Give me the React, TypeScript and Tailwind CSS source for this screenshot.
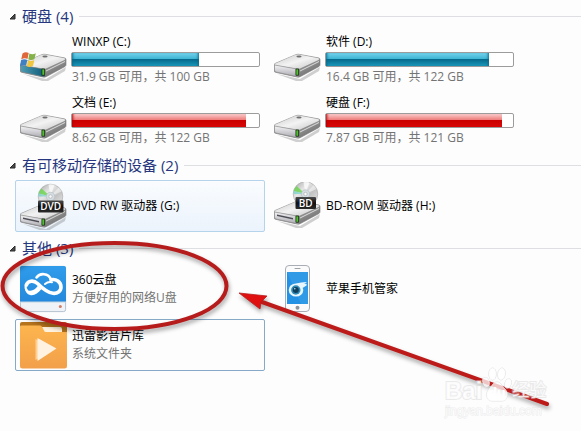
import type { ReactNode } from "react";
import clsx from "clsx";

interface SectionProps {
  title: string;
  count: number;
  children: ReactNode;
}

interface TileProps {
  icon: ReactNode;
  name: string;
  detail?: string;
  className?: string;
}

interface Drive {
  name: string;
  used: number;
  detail: string;
  full?: boolean;
  system?: boolean;
}

const drives: Drive[] = [
  { name: "WINXP (C:)", used: 68, detail: "31.9 GB 可用，共 100 GB", system: true },
  { name: "软件 (D:)", used: 87, detail: "16.4 GB 可用，共 122 GB" },
  { name: "文档 (E:)", used: 93, detail: "8.62 GB 可用，共 122 GB", full: true },
  { name: "硬盘 (F:)", used: 94, detail: "7.87 GB 可用，共 121 GB", full: true },
];

// Shared gradients for all of the icons
function Gradients() {
  return (
    <svg className="absolute size-0" aria-hidden="true">
      <defs>
        <linearGradient id="driveTop" x1="0" y1="0" x2="1" y2="1">
          <stop offset="0" stopColor="#c9c9c9" />
          <stop offset="0.5" stopColor="#f3f3f3" />
          <stop offset="1" stopColor="#c4c4c4" />
        </linearGradient>
        <linearGradient id="driveSide" x1="0" y1="0" x2="1" y2="1">
          <stop offset="0" stopColor="#d8d8d8" />
          <stop offset="0.5" stopColor="#9a9a9a" />
          <stop offset="1" stopColor="#626262" />
        </linearGradient>
        <linearGradient id="driveFront" x1="0" y1="0" x2="0" y2="1">
          <stop offset="0" stopColor="#f4f4f6" />
          <stop offset="1" stopColor="#a9a9b0" />
        </linearGradient>
        <linearGradient id="driveTeal" x1="0" y1="0" x2="1" y2="0">
          <stop offset="0" stopColor="#4f9cb4" />
          <stop offset="1" stopColor="#0c5a76" />
        </linearGradient>
        <linearGradient id="disc" x1="0" y1="0" x2="1" y2="1">
          <stop offset="0" stopColor="#a2a2a2" />
          <stop offset="0.35" stopColor="#e6e6e6" />
          <stop offset="0.6" stopColor="#c3c3c3" />
          <stop offset="1" stopColor="#eeeeee" />
        </linearGradient>
        <linearGradient id="discLabel" x1="0" y1="0" x2="0" y2="1">
          <stop offset="0" stopColor="#4c4c4c" />
          <stop offset="0.5" stopColor="#111111" />
          <stop offset="1" stopColor="#2c2c2c" />
        </linearGradient>
        <linearGradient id="cloudBlue" x1="0" y1="0" x2="0" y2="1">
          <stop offset="0" stopColor="#2f9cea" />
          <stop offset="1" stopColor="#2488dc" />
        </linearGradient>
        <linearGradient id="folder" x1="0" y1="0" x2="0" y2="1">
          <stop offset="0" stopColor="#fdb54e" />
          <stop offset="1" stopColor="#f2a04a" />
        </linearGradient>
      </defs>
    </svg>
  );
}

function DriveBody({ teal }: { teal?: boolean }) {
  return (
    <>
      <path d="M3 20 L26 25 L46 13 L45 17 L28 27 L22 27 Z" fill="#000" opacity="0.18" />
      <path
        d="M1 9.5 Q0 10 0 11 V16.5 Q0 18 1.5 18.3 L23 23 Q25 23.5 26.5 22.5 L45 12.5 Q46 12 46 10.5 V5.5 Q46 4.5 45 4 L25 0.3 Q23 0 21 1 Z"
        fill="url(#driveSide)"
        stroke="#7a7a7a"
        strokeWidth="0.6"
      />
      <path d="M1 9.7 L21 1 Q23 0.2 25 0.6 L44.5 4.2 Q46 5 44.5 6 L26 14.6 Q25 15 23 14.7 L1.5 11 Q0 10.5 1 9.7 Z" fill="url(#driveTop)" />
      <path
        d="M0.5 11 L23 15 Q25 15.2 25 16.8 V21.5 Q25 23 23 22.7 L2 18 Q0.5 17.6 0.5 16 Z"
        fill={teal ? "url(#driveTeal)" : "url(#driveFront)"}
        stroke="#868686"
        strokeWidth="0.6"
      />
      <path d="M26 17 L45 7.5" stroke="#efefef" strokeWidth="0.8" fill="none" />
      <ellipse cx="25" cy="2.5" rx="2.6" ry="1" fill="#6f6f6f" />
      <rect x="21.5" y="14.6" width="3.6" height="7.2" rx="0.8" fill="#1c3415" />
      <rect x="22.3" y="15.4" width="1.9" height="5.4" fill="#51bd31" />
    </>
  );
}

function HardDriveIcon({ system }: { system?: boolean }) {
  return (
    <svg viewBox="0 0 48 48" className="size-12 shrink-0" aria-hidden="true">
      <g transform="translate(0 18)">
        <DriveBody teal={system} />
      </g>
      {system && (
        <g>
          <path d="M2.5 17.5 Q5.5 15.2 8.7 17 L7.5 23 Q4.5 21.4 1.2 23.5 Z" fill="#e0683c" />
          <path d="M9.4 17.4 Q12.5 19 15.8 17.2 L14.5 23 Q11.5 25 8.3 23.3 Z" fill="#85b14a" />
          <path d="M1 24.3 Q4.2 22.3 7.3 24 L6.1 29.8 Q3.2 28.3 0 30.3 Z" fill="#3f7fc4" />
          <path d="M8 24.3 Q11.2 26 14.3 24 L13.1 29.8 Q10 31.8 6.8 30.2 Z" fill="#f0c640" />
        </g>
      )}
    </svg>
  );
}

function DiscDriveIcon({ label }: { label: "DVD" | "BD" }) {
  const dvd = label === "DVD";
  return (
    <svg viewBox="0 0 48 48" className="size-12 shrink-0" aria-hidden="true">
      <g transform={dvd ? "translate(0 22)" : "translate(0 19)"}>
        <DriveBody />
        <path d="M3 13.5 L19 17 V18.5 L3 15 Z" fill="#4d4d55" />
      </g>
      <g transform={dvd ? "translate(30.5 14.5)" : "translate(31.5 12)"}>
        <circle r="12.3" fill="url(#disc)" stroke="#a5a5a5" strokeWidth="0.6" />
        <path d="M0 0 L-11.8 -3 A12 12 0 0 1 -9 -8 Z" fill="#69d64c" opacity="0.8" />
        <path d="M0 0 L-12 0 A12 12 0 0 1 -11.8 -3 Z" fill="#7fd5cf" opacity="0.8" />
        <path d="M0 0 L-2 -12 A12 12 0 0 1 4 -11.5 Z" fill="#fff" opacity="0.7" />
        <path d="M0 0 L8 -9 A12 12 0 0 1 11 -5 Z" fill="#fff" opacity="0.5" />
        <circle r="4.2" fill="#d4dde3" stroke="#b4bcc2" strokeWidth="0.6" />
        <circle r="1.7" fill="#fafafa" stroke="#9a9a9a" strokeWidth="0.5" />
      </g>
      {dvd ? (
        <>
          <rect x="18" y="18.5" width="25.5" height="12" rx="1" fill="url(#discLabel)" />
          <text x="30.7" y="28" textAnchor="middle" fontSize="10" fontWeight="600" fill="#fff">
            DVD
          </text>
        </>
      ) : (
        <>
          <rect x="21.5" y="15" width="20.5" height="12" rx="1" fill="url(#discLabel)" />
          <text x="31.7" y="24.6" textAnchor="middle" fontSize="10" fontWeight="600" fill="#fff">
            BD
          </text>
        </>
      )}
    </svg>
  );
}

function CloudDiskIcon() {
  return (
    <svg viewBox="0 0 48 48" className="size-12 shrink-0" aria-hidden="true">
      <rect x="0.4" y="1.4" width="45.2" height="45.2" rx="2" fill="#eff3f7" stroke="#a5b4c4" strokeWidth="0.8" />
      <path d="M0 37 V3 Q0 1 2 1 H44 Q46 1 46 3 V37 Z" fill="url(#cloudBlue)" />
      <path d="M0 37 H46" stroke="#c4d4e2" />
      <circle cx="40.3" cy="41.5" r="1.5" fill="#d07c66" />
      <g fill="none" stroke="#fff" strokeLinecap="round">
        <path d="M16.5 12.5 C20 7.5 28.5 8 31 14.5" strokeWidth="2.6" />
        <path
          d="M31 14.8 C36 13.5 41 17 41 22 C41 26.5 37 28.8 33 28.3 C27 27.5 22 23 17.5 18.5 C13.5 14.8 8 15.5 6.3 20"
          strokeWidth="3.6"
        />
        <path d="M25 19 C27 17.2 29.5 16.6 32 17.2" strokeWidth="2" />
        <path d="M6 20 C5.3 22 5.6 24 7 25.5" strokeWidth="2.2" />
      </g>
      <path d="M5 22.5 C7 27 12.5 26.5 16 23 L18 20.8 L21.5 24 C18 28.5 14 31 10 30 C6.5 29 5 26 5 22.5 Z" fill="#fff" />
      <path d="M20.2 16.5 L22.8 19" stroke="#2b92e2" strokeWidth="0.8" />
    </svg>
  );
}

function PhoneIcon() {
  return (
    <svg viewBox="0 0 48 48" className="size-12 shrink-0" aria-hidden="true">
      <rect x="11.5" y="0.5" width="24" height="46" rx="3.5" fill="#fbfbfc" stroke="#a8adb6" />
      <path d="M21 3.5 H26" stroke="#9ea3aa" strokeLinecap="round" />
      <rect x="13" y="7" width="21" height="32" fill="#2492e4" />
      <path d="M13 7 L27 39 H34 V7 Z" fill="#49a9ee" opacity="0.35" />
      <circle cx="23.5" cy="42.8" r="2" fill="#8e949c" />
      <ellipse cx="22" cy="25" rx="7.3" ry="6.6" fill="#e8f6fd" />
      <path d="M22 18.6 Q28 16.8 33 17 Q31.5 18.2 30 18.6 Q33.5 18.8 32.5 20.5 L28.5 23 Z" fill="#e8f6fd" />
      <circle cx="21.8" cy="25" r="4.7" fill="#2f8cb8" />
      <circle cx="21.8" cy="25" r="3" fill="#103d59" />
      <circle cx="20.8" cy="23.8" r="0.8" fill="#b9e6fa" />
    </svg>
  );
}

function MediaFolderIcon() {
  return (
    <svg viewBox="0 0 48 48" className="size-12 shrink-0" aria-hidden="true">
      <path d="M0 14 V3 Q0 1 2 1 H45 Q47 1 47 3 V14 Z" fill="#b5731c" />
      <path d="M21 6 H40 Q42 6 42 8 V13 H25 Z" fill="#fff3df" />
      <path d="M0 5.5 Q0 4.5 1.5 4.5 H20 Q21.5 4.5 22.2 6 L24 9.5 Q24.5 11 26 11 H47 V45 Q47 47.5 44.5 47.5 H2.5 Q0 47.5 0 45 Z" fill="url(#folder)" />
      <path d="M15.5 18 V39 L34 28.5 Z" fill="#ffcf93" />
      <path d="M17.5 17 V40 L36.5 27.5 Z" fill="#fff2e0" />
    </svg>
  );
}

function Section({ title, count, children }: SectionProps) {
  return (
    <section>
      <div className="mb-[5px] flex h-5 items-center">
        <svg viewBox="0 0 7 7" className="mr-1.5 size-[7px]" aria-hidden="true">
          <path d="M6 1 V6 H1 Z" fill="#4a4a4a" stroke="#2a2a2a" />
        </svg>
        <h2 className="mr-1.5 text-[15px] leading-5 text-[#26377f]">
          {title} ({count})
        </h2>
        <div className="h-px flex-1 bg-[#dddfe2]" />
      </div>
      <div className="ml-1.5 grid grid-cols-[repeat(auto-fill,250px)] gap-1">{children}</div>
    </section>
  );
}

function Tile({ icon, name, detail, className }: TileProps) {
  return (
    <div className={clsx("flex h-13 items-center gap-[3px] rounded-xs border px-1", className ?? "border-transparent")}>
      {icon}
      <div className="flex flex-col gap-0.5 pl-px">
        <p className="text-black">{name}</p>
        {detail && <p className="text-[#747474]">{detail}</p>}
      </div>
    </div>
  );
}

function DriveTile({ drive }: { drive: Drive }) {
  return (
    <div className="flex h-[57px] items-center gap-[3px] border border-transparent px-1">
      <HardDriveIcon system={drive.system} />
      <div className="flex flex-1 flex-col gap-0.5">
        <p className="pl-px text-black">{drive.name}</p>
        <div
          role="meter"
          aria-label={drive.name}
          aria-valuenow={drive.used}
          aria-valuemin={0}
          aria-valuemax={100}
          className="h-[15px] rounded-xs border border-[#9c9c9c] bg-white"
        >
          <div
            className={clsx(
              "h-full",
              drive.full
                ? "bg-[linear-gradient(#f9cccc,#ee7c7c_45%,#cc0000_50%,#d80808)] shadow-[inset_3px_0_3px_-2px_#b80000]"
                : "bg-[linear-gradient(#72d2ec,#3fb4d4_45%,#056a8c_50%,#1a98ba)] shadow-[inset_3px_0_3px_-2px_#0b6d8d,inset_-3px_0_3px_-2px_#0b6d8d]"
            )}
            style={{ width: `${drive.used}%` }}
          />
        </div>
        <p className="pl-px text-[#747474]">{drive.detail}</p>
      </div>
    </div>
  );
}

// Red ellipse and arrow that point at the cloud disk
function Annotation() {
  return (
    <svg
      viewBox="0 0 581 431"
      className="pointer-events-none absolute top-0 left-0 h-[431px] w-[581px] drop-shadow-[1px_3px_2px_rgba(0,0,0,0.35)]"
      aria-hidden="true"
    >
      <ellipse cx="114.5" cy="286" rx="112" ry="43" fill="none" stroke="#b71c1c" strokeWidth="4" />
      <path d="M262 302 L547 404" stroke="#bd1a1a" strokeWidth="4" strokeLinecap="round" />
      <path d="M239 293 L267 296 L261 302 L260 309 Z" fill="#e01010" stroke="#b71c1c" strokeWidth="0.8" />
    </svg>
  );
}

function Watermark() {
  return (
    <div className="absolute top-[367px] left-[445px] text-white/80 [paint-order:stroke]">
      <div className="flex h-9 items-end font-['Liberation_Sans','Noto_Sans_CJK_SC',sans-serif] [-webkit-text-stroke:2px_#d8d8d880]">
        <span className="text-[24px] leading-6 font-bold">Bai</span>
        <svg viewBox="0 0 30 36" className="h-9 w-[30px]" aria-hidden="true">
          <g fill="#fff" fillOpacity="0.75" stroke="#dcdcdc" strokeWidth="0.8">
            <ellipse cx="4" cy="15" rx="3.2" ry="4.8" transform="rotate(-15 4 15)" />
            <ellipse cx="10.5" cy="7" rx="3.7" ry="6" />
            <ellipse cx="19.5" cy="7" rx="3.7" ry="6" transform="rotate(8 19.5 7)" />
            <ellipse cx="26" cy="16.5" rx="3.2" ry="4.8" transform="rotate(15 26 16.5)" />
            <path d="M15 15 C19 15 20 19 23 22 C27 26 26 34 20 34 C17 34 13 34 10 34 C4 34 3 26 7 22 C10 19 11 15 15 15 Z" />
          </g>
          <text x="15" y="31" textAnchor="middle" fontSize="14" fontWeight="700" fill="#fff">
            du
          </text>
        </svg>
        <span className="text-[17px] leading-6">经验</span>
      </div>
      <p className="font-['Liberation_Sans',sans-serif] text-xs [-webkit-text-stroke:1px_#d8d8d880]">
        jingyan.baidu.com
      </p>
    </div>
  );
}

export default function App() {
  return (
    <main className="relative min-h-screen overflow-hidden bg-[#fdfdfd] pt-1.5 pl-[9px] font-['Open_Sans','Noto_Sans_CJK_SC',sans-serif] text-xs leading-4">
      <Gradients />
      <div className="flex flex-col gap-1.5">
        <Section title="硬盘" count={4}>
          {drives.map((drive) => (
            <DriveTile key={drive.name} drive={drive} />
          ))}
        </Section>

        <Section title="有可移动存储的设备" count={2}>
          <Tile
            icon={<DiscDriveIcon label="DVD" />}
            name="DVD RW 驱动器 (G:)"
            className="border-[#b5d3ea] bg-linear-to-b from-[#fafcfe] to-[#ebf3fc]"
          />
          <Tile icon={<DiscDriveIcon label="BD" />} name="BD-ROM 驱动器 (H:)" />
        </Section>

        <Section title="其他" count={3}>
          <Tile icon={<CloudDiskIcon />} name="360云盘" detail="方便好用的网络U盘" />
          <Tile icon={<PhoneIcon />} name="苹果手机管家" />
          <Tile
            icon={<MediaFolderIcon />}
            name="迅雷影音片库"
            detail="系统文件夹"
            className="border-[#86a9c8]"
          />
        </Section>
      </div>
      <Annotation />
      <Watermark />
    </main>
  );
}
